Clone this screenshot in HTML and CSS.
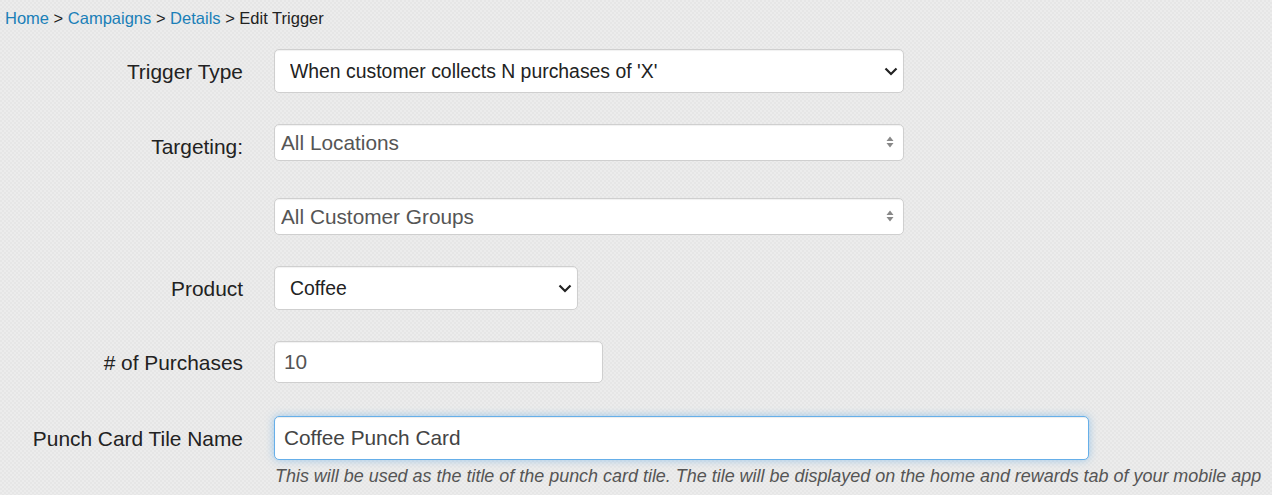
FILE: index.html
```html
<!DOCTYPE html>
<html lang="en">
<head>
<meta charset="utf-8">
<title>Edit Trigger</title>
<link rel="stylesheet" href="styles.css">
</head>
<body>
<nav class="crumbs">
  <a href="#">Home</a> &gt; <a href="#">Campaigns</a> &gt; <a href="#">Details</a> &gt; <span>Edit Trigger</span>
</nav>

<form class="trigger-form">
  <div class="row row-tall">
    <label class="lbl">Trigger Type</label>
    <div class="ctl ctl-wide">
      <div class="pick">
        <select class="field field-tall">
          <option>When customer collects N purchases of 'X'</option>
        </select>
        <svg class="chev" width="14" height="9" viewBox="0 0 14 9"><path d="M1.5 1.5 L7 7 L12.5 1.5" fill="none" stroke="#222" stroke-width="2.2"/></svg>
      </div>
    </div>
  </div>

  <div class="row row-short">
    <label class="lbl lbl-drop">Targeting:</label>
    <div class="ctl ctl-wide">
      <div class="pick">
        <select class="field field-short">
          <option>All Locations</option>
        </select>
        <svg class="updown" width="8" height="12" viewBox="0 0 8 12"><path d="M4 0.5 L7.5 5 L0.5 5 Z M4 11.5 L7.5 7 L0.5 7 Z" fill="#888"/></svg>
      </div>
    </div>
  </div>

  <div class="row row-short row-gap">
    <span class="lbl"></span>
    <div class="ctl ctl-wide">
      <div class="pick">
        <select class="field field-short">
          <option>All Customer Groups</option>
        </select>
        <svg class="updown" width="8" height="12" viewBox="0 0 8 12"><path d="M4 0.5 L7.5 5 L0.5 5 Z M4 11.5 L7.5 7 L0.5 7 Z" fill="#888"/></svg>
      </div>
    </div>
  </div>

  <div class="row row-tall">
    <label class="lbl">Product</label>
    <div class="ctl ctl-product">
      <div class="pick">
        <select class="field field-tall">
          <option>Coffee</option>
        </select>
        <svg class="chev" width="14" height="9" viewBox="0 0 14 9"><path d="M1.5 1.5 L7 7 L12.5 1.5" fill="none" stroke="#222" stroke-width="2.2"/></svg>
      </div>
    </div>
  </div>

  <div class="row row-mid">
    <label class="lbl"># of Purchases</label>
    <div class="ctl ctl-count">
      <input class="field field-input" type="text" value="10">
    </div>
  </div>

  <div class="row row-tall row-last">
    <label class="lbl">Punch Card Tile Name</label>
    <div class="ctl ctl-name">
      <input class="field field-input field-focus" type="text" value="Coffee Punch Card">
      <p class="help">This will be used as the title of the punch card tile. The tile will be displayed on the home and rewards tab of your mobile app</p>
    </div>
  </div>
</form>
</body>
</html>
```

FILE: styles.css
```css
html, body {
  margin: 0;
  padding: 0;
}

body {
  font-family: "Liberation Sans", Arial, sans-serif;
  color: #222;
  background-color: #e9e9e9;
  background-image: conic-gradient(#ececec 25%, #e6e6e6 0 50%, #ececec 0 75%, #e6e6e6 0);
  background-size: 4px 4px;
  height: 495px;
  overflow: hidden;
}

.crumbs {
  font-size: 16.5px;
  line-height: 18px;
  padding: 9px 0 0 5px;
  color: #222;
}

.crumbs a {
  color: #1a7fb8;
  text-decoration: none;
}

.trigger-form {
  display: flex;
  flex-direction: column;
  margin-top: 22px;
}

.row {
  display: flex;
  align-items: flex-start;
  margin-bottom: 31px;
}

.row-gap {
  margin-top: 6px;
}

.row-last {
  margin-top: 2px;
  margin-bottom: 0;
}

.lbl {
  flex: 0 0 243px;
  text-align: right;
  font-size: 20.9px;
  color: #222;
  margin-right: 31px;
  padding-top: 2px;
}

/* label text sits slightly below its control's centre */
.row-tall .lbl { line-height: 42px; }
.row-short .lbl { line-height: 35px; }
.row-mid .lbl { line-height: 40px; }
.row-short .lbl-drop { padding-top: 8px; line-height: 29px; }

.ctl-wide { width: 630px; }
.ctl-product { width: 304px; }
.ctl-count { width: 329px; }
.ctl-name { width: 815px; }

.pick {
  position: relative;
}

.field {
  display: block;
  width: 100%;
  box-sizing: border-box;
  margin: 0;
  font-family: "Liberation Sans", Arial, sans-serif;
  font-size: 20.8px;
  background: #fff;
  border: 1px solid #cfcfcf;
  border-radius: 5px;
  box-shadow: inset 0 1px 1px rgba(0, 0, 0, 0.06);
  -webkit-appearance: none;
  appearance: none;
  outline: none;
}

.field-tall {
  height: 44px;
  padding: 0 40px 0 15px;
  font-size: 19.4px;
  color: #222;
}

.field-short {
  height: 37px;
  padding: 0 30px 0 6px;
  color: #555;
}

.field-input {
  height: 42px;
  padding: 0 9px;
  color: #555;
}

.field-focus {
  height: 44px;
  border-color: #66afe9;
  color: #444;
  box-shadow: inset 0 1px 1px rgba(0, 0, 0, 0.075), 0 0 8px rgba(102, 175, 233, 0.6);
}

.chev {
  position: absolute;
  right: 6px;
  top: 18px;
}

.updown {
  position: absolute;
  right: 10px;
  top: 12px;
}

.help {
  margin: 6px 0 0 1px;
  font-size: 17.95px;
  font-style: italic;
  color: #555;
  white-space: nowrap;
  line-height: 20px;
}
```
